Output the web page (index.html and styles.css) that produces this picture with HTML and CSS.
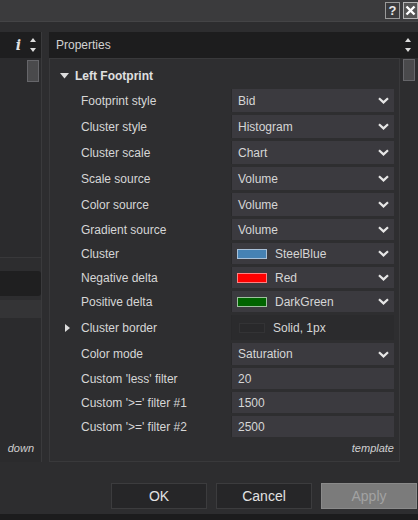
FILE: index.html
```html
<!DOCTYPE html>
<html>
<head>
<meta charset="utf-8">
<link rel="stylesheet" href="styles.css">
</head>
<body>
<div class="win">
  <div class="titlebar">
    <span class="tbtn q">?</span>
    <span class="tbtn x">
      <svg width="11" height="11" viewBox="0 0 11 11"><path d="M1.5 1.5 L9.5 9.5 M9.5 1.5 L1.5 9.5" stroke="#fff" stroke-width="2.4"/></svg>
    </span>
  </div>
  <div class="main">
    <div class="left">
      <div class="lhead">
        <span class="info">i</span>
        <span class="arrows">
          <svg width="8" height="20" viewBox="0 0 8 20"><path d="M4 3 L7 7 L1 7 Z" fill="#ddd"/><path d="M1 13 L7 13 L4 17 Z" fill="#ddd"/></svg>
        </span>
      </div>
      <div class="lbody">
        <div class="lscroll"><div class="thumb"></div></div>
      </div>
      <div class="ldark"></div>
      <div class="lstrip"></div>
      <div class="lbottom"><span class="down">down</span></div>
    </div>
    <div class="right">
      <div class="rhead">
        <span class="rtitle">Properties</span>
        <span class="rarrows">
          <svg width="8" height="20" viewBox="0 0 8 20"><path d="M4 3 L7 7 L1 7 Z" fill="#ddd"/><path d="M1 13 L7 13 L4 17 Z" fill="#ddd"/></svg>
        </span>
      </div>
      <div class="rbody">
        <div class="content">
          <div class="grid">
            <div class="section"><svg class="tri" width="9" height="6" viewBox="0 0 9 6"><path d="M0 0 L9 0 L4.5 5.5 Z" fill="#ddd"/></svg><span>Left Footprint</span></div>

            <div class="label">Footprint style</div>
            <div class="val drop"><span>Bid</span><svg class="chev" width="11" height="7" viewBox="0 0 11 7"><path d="M1 1.2 L5.5 5.4 L10 1.2" fill="none" stroke="#e6e6e6" stroke-width="2.2"/></svg></div>

            <div class="label">Cluster style</div>
            <div class="val drop"><span>Histogram</span><svg class="chev" width="11" height="7" viewBox="0 0 11 7"><path d="M1 1.2 L5.5 5.4 L10 1.2" fill="none" stroke="#e6e6e6" stroke-width="2.2"/></svg></div>

            <div class="label">Cluster scale</div>
            <div class="val drop"><span>Chart</span><svg class="chev" width="11" height="7" viewBox="0 0 11 7"><path d="M1 1.2 L5.5 5.4 L10 1.2" fill="none" stroke="#e6e6e6" stroke-width="2.2"/></svg></div>

            <div class="label">Scale source</div>
            <div class="val drop"><span>Volume</span><svg class="chev" width="11" height="7" viewBox="0 0 11 7"><path d="M1 1.2 L5.5 5.4 L10 1.2" fill="none" stroke="#e6e6e6" stroke-width="2.2"/></svg></div>

            <div class="label">Color source</div>
            <div class="val drop"><span>Volume</span><svg class="chev" width="11" height="7" viewBox="0 0 11 7"><path d="M1 1.2 L5.5 5.4 L10 1.2" fill="none" stroke="#e6e6e6" stroke-width="2.2"/></svg></div>

            <div class="label">Gradient source</div>
            <div class="val drop"><span>Volume</span><svg class="chev" width="11" height="7" viewBox="0 0 11 7"><path d="M1 1.2 L5.5 5.4 L10 1.2" fill="none" stroke="#e6e6e6" stroke-width="2.2"/></svg></div>

            <div class="label">Cluster</div>
            <div class="val drop"><span class="sw steel"></span><span>SteelBlue</span><svg class="chev" width="11" height="7" viewBox="0 0 11 7"><path d="M1 1.2 L5.5 5.4 L10 1.2" fill="none" stroke="#e6e6e6" stroke-width="2.2"/></svg></div>

            <div class="label">Negative delta</div>
            <div class="val drop"><span class="sw red"></span><span>Red</span><svg class="chev" width="11" height="7" viewBox="0 0 11 7"><path d="M1 1.2 L5.5 5.4 L10 1.2" fill="none" stroke="#e6e6e6" stroke-width="2.2"/></svg></div>

            <div class="label">Positive delta</div>
            <div class="val drop"><span class="sw green"></span><span>DarkGreen</span><svg class="chev" width="11" height="7" viewBox="0 0 11 7"><path d="M1 1.2 L5.5 5.4 L10 1.2" fill="none" stroke="#e6e6e6" stroke-width="2.2"/></svg></div>

            <div class="label exp"><svg class="rtri" width="5" height="8" viewBox="0 0 5 8"><path d="M0 0 L5 4 L0 8 Z" fill="#ddd"/></svg>Cluster border</div>
            <div class="val plain"><span class="sw dark"></span><span>Solid, 1px</span></div>

            <div class="label">Color mode</div>
            <div class="val drop"><span>Saturation</span><svg class="chev" width="11" height="7" viewBox="0 0 11 7"><path d="M1 1.2 L5.5 5.4 L10 1.2" fill="none" stroke="#e6e6e6" stroke-width="2.2"/></svg></div>

            <div class="label">Custom 'less' filter</div>
            <div class="val drop"><span>20</span></div>

            <div class="label">Custom '&gt;=' filter #1</div>
            <div class="val drop"><span>1500</span></div>

            <div class="label">Custom '&gt;=' filter #2</div>
            <div class="val drop"><span>2500</span></div>
          </div>
          <div class="template">template</div>
        </div>
        <div class="rscroll"><div class="thumb"></div></div>
      </div>
    </div>
  </div>
  <div class="buttons">
    <span class="btn">OK</span>
    <span class="btn">Cancel</span>
    <span class="btn apply">Apply</span>
  </div>
  <div class="footer"></div>
</div>
</body>
</html>
```

FILE: styles.css
```css
* { box-sizing: border-box; }
html, body { margin: 0; padding: 0; }
body {
  width: 418px;
  height: 520px;
  background: #2d2d2f;
  font-family: "Liberation Sans", Arial, sans-serif;
  font-size: 12px;
  color: #d6d6d6;
  overflow: hidden;
}
.win { display: flex; flex-direction: column; height: 520px; }

.titlebar {
  height: 22px;
  background: #3b3b3d;
  border-bottom: 1px solid #444446;
  display: flex;
  justify-content: flex-end;
  align-items: center;
  gap: 3px;
}
.tbtn {
  width: 15px;
  height: 17px;
  display: flex;
  align-items: center;
  justify-content: center;
  border: 1px solid #9a9a9a;
  background: #3a3a3c;
  color: #e8e8e8;
  font-weight: bold;
  font-size: 13px;
}
.tbtn.x { background: #555; border-color: #b5b5b5; }

.main {
  display: flex;
  gap: 7px;
  margin-top: 10px;
  height: 430px;
}

.left {
  width: 43px;
  display: flex;
  flex-direction: column;
  border-right: 1px solid #3a3a3c;
}
.lhead {
  height: 26px;
  background: #1e1e1f;
  display: flex;
  align-items: center;
  justify-content: flex-end;
  padding-right: 4px;
  gap: 8px;
}
.info {
  font-family: "DejaVu Serif", serif;
  font-style: italic;
  font-weight: bold;
  font-size: 14px;
  color: #e2e2e2;
}
.arrows { display: flex; }
.lbody {
  height: 200px;
  background: #2b2b2d;
  border-bottom: 1px solid #38383a;
  display: flex;
  justify-content: flex-end;
  padding-right: 2px;
}
.lscroll { width: 12px; padding-top: 2px; }
.thumb {
  height: 22px;
  background: #4a4a4c;
  border: 1px solid #66666a;
}
.ldark {
  height: 25px;
  margin-top: 13px;
  background: #1f1f20;
  border-radius: 0 3px 3px 0;
}
.lstrip {
  height: 18px;
  margin-top: 4px;
  background: #343436;
}
.lbottom {
  flex: 1;
  background: #2b2b2d;
  display: flex;
  align-items: flex-end;
  justify-content: flex-end;
  padding: 0 7px 8px 0;
}
.down { font-style: italic; font-size: 11px; color: #cfcfcf; }

.right { flex: 1; display: flex; flex-direction: column; }
.rhead {
  height: 26px;
  background: #1d1d1e;
  display: flex;
  align-items: center;
  justify-content: space-between;
  padding: 0 6px 0 7px;
}
.rtitle { color: #d2d2d2; }
.rarrows { display: flex; }
.rbody { flex: 1; display: flex; }
.content {
  flex: 1;
  background: #2e2e30;
  border: 1px solid #39393b;
  display: flex;
  flex-direction: column;
  padding: 6px 5px 0 10px;
}
.grid {
  display: grid;
  grid-template-columns: 172px 162px;
  grid-template-rows: 21px 23px 23px 23px 23px 23px 21px 21px 21px 21px 25px 22px 21px 21px 21px;
  row-gap: 3px;
}
.section {
  grid-column: 1 / 3;
  display: flex;
  align-items: center;
  gap: 6px;
  font-weight: bold;
  color: #e0e0e0;
}
.label {
  display: flex;
  align-items: center;
  padding-left: 21px;
  border-right: 1px solid #29292b;
}
.label.exp { padding-left: 5px; }
.rtri { margin-right: 11px; }
.val {
  display: flex;
  align-items: center;
  padding-left: 6px;
  padding-right: 5px;
}
.drop { background: #3b3a3f; }
.plain { background: #2b2b2d; }
.chev { margin-left: auto; }
.sw {
  width: 30px;
  height: 10px;
  margin-right: 8px;
  margin-left: -1px;
  border: 1px solid #cfcfcf;
}
.sw.steel { background: #4682b4; border-color: #a8c0d8; }
.sw.red { background: #ff0000; border-color: #ff8080; }
.sw.green { background: #006400; border-color: #9ec09e; }
.sw.dark { width: 26px; background: #29292b; border-color: #333335; margin-left: 1px; margin-right: 8px; }
.template {
  margin-top: auto;
  align-self: flex-end;
  font-style: italic;
  font-size: 11px;
  color: #d0d0d0;
  padding: 0 0 7px 0;
}
.rscroll {
  width: 18px;
  padding: 1px 3px 0 3px;
}

.buttons {
  display: flex;
  justify-content: flex-end;
  gap: 9px;
  margin-top: 21px;
  padding-right: 1px;
}
.btn {
  width: 96px;
  height: 26px;
  display: flex;
  align-items: center;
  justify-content: center;
  background: #262628;
  border: 1px solid #3c3c3e;
  color: #e2e2e2;
  font-size: 14px;
}
.btn.apply { background: #7b7b7b; border-color: #8a8a8a; color: #a2a2a2; }
.footer { margin-top: auto; height: 6px; background: #1c1c1d; }
```
